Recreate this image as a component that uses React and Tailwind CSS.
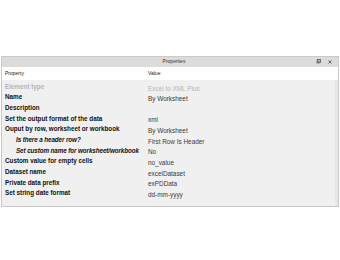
const rows = [
  { label: "Element type", value: "Excel to XML Plus", dim: true },
  { label: "Name", value: "By Worksheet" },
  { label: "Description", value: "" },
  { label: "Set the output format of the data", value: "xml" },
  { label: "Ouput by row, worksheet or workbook", value: "By Worksheet" },
  { label: "Is there a header row?", value: "First Row Is Header", sub: true },
  { label: "Set custom name for worksheet/workbook", value: "No", sub: true },
  { label: "Custom value for empty cells", value: "no_value" },
  { label: "Dataset name", value: "excelDataset" },
  { label: "Private data prefix", value: "exPDData" },
  { label: "Set string date format", value: "dd-mm-yyyy" },
];

export default function App() {
  return (
    <div className="w-[340px] h-[260px] bg-white flex flex-col pt-[56px] font-['Liberation_Sans',sans-serif]">
      <div className="mx-[1px] border border-[#c9c9c9] flex flex-col">
        {/* title bar */}
        <div className="h-[10px] bg-[#dcdcdc] flex items-center relative">
          <span className="flex-1 text-center text-[5px] text-[#333] pl-[8px]">Properties</span>
          <div className="absolute right-[6px] top-[2px] flex gap-[7px] items-center">
            <svg width="5" height="5" viewBox="0 0 5 5">
              <rect x="1.5" y="0.5" width="3" height="3" fill="none" stroke="#555" strokeWidth="0.8" />
              <rect x="0.5" y="1.5" width="3" height="3" fill="#777" />
            </svg>
            <svg width="4" height="4" viewBox="0 0 4 4">
              <path d="M0.5 0.5 L3.5 3.5 M3.5 0.5 L0.5 3.5" stroke="#555" strokeWidth="0.9" />
            </svg>
          </div>
        </div>
        {/* header */}
        <div className="h-[13px] bg-white flex items-center text-[5px] text-[#222] mr-[3px]">
          <span className="w-[146px] pl-[3px]">Property</span>
          <span>Value</span>
        </div>
        {/* body */}
        <div className="bg-[#f0f0f0] pt-[1px] pb-[8px] border-r-[3px] border-[#e6e6e6]">
          {rows.map((r) => (
            <div key={r.label} className="flex h-[10.67px] items-center">
              <div
                className={`w-[146px] whitespace-nowrap font-bold text-[6.3px] ${
                  r.sub ? "italic pl-[14px] tracking-[-0.1px]" : "pl-[3px]"
                } ${r.dim ? "text-[#b5b5b5]" : "text-[#111]"}`}
              >
                {r.label}
              </div>
              <div
                className={`translate-y-[2px] whitespace-nowrap text-[6.4px] ${
                  r.dim ? "text-[#b5b5b5]" : "text-[#3a3a3a]"
                }`}
              >
                {r.value}
              </div>
            </div>
          ))}
        </div>
      </div>
    </div>
  );
}
